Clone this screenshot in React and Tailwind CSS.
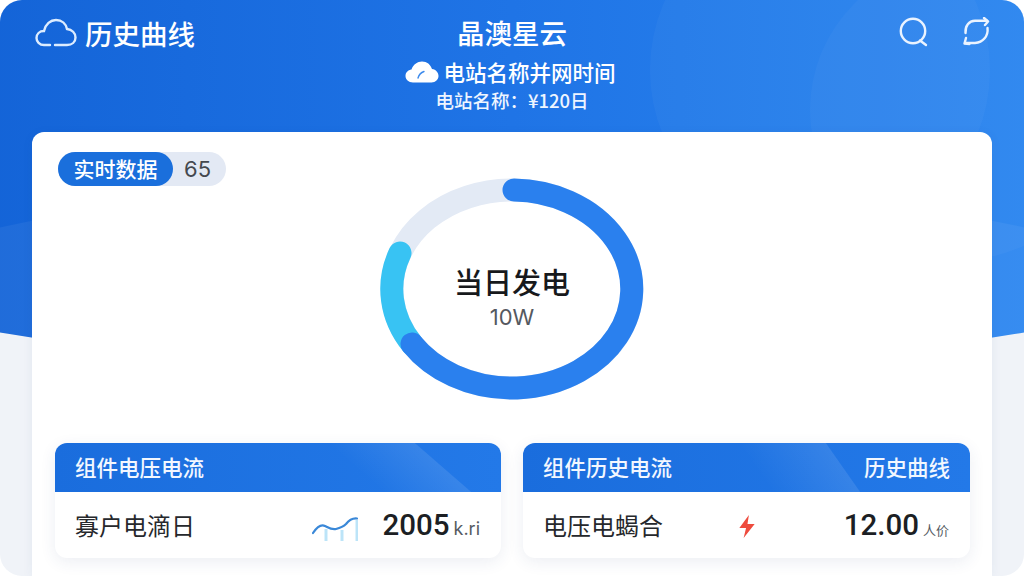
const cjk = "font-['Noto_Sans_CJK_SC','Noto_Sans',sans-serif]";

function Ring() {
  return (
    <svg width="264" height="224" viewBox="0 0 264 224" className="block">
      <ellipse cx="132" cy="112" rx="120" ry="99" fill="none" stroke="#e3eaf5" strokeWidth="23" />
      <path d="M20 76 A120 99 0 0 0 32 167" fill="none" stroke="#38c3f3" strokeWidth="23" strokeLinecap="round" />
      <path d="M32 167 A120 99 0 1 0 134 13" fill="none" stroke="#2a80ee" strokeWidth="23" strokeLinecap="round" />
    </svg>
  );
}

function LogoCloud() {
  return (
    <svg width="42" height="30" viewBox="0 0 42 30" fill="none" stroke="#dcecff" strokeWidth="2.4" strokeLinecap="round">
      <path d="M15 27H9C4.5 27 1.5 23.5 1.5 20C1.5 16 4.5 13 9 13C10.5 6 15.5 2 21 2C27 2 31 6 32 11C37 11.5 40.5 15 40.5 19.5C40.5 24 37 27 32 27H20" />
    </svg>
  );
}

function SolidCloud() {
  return (
    <svg width="34" height="22" viewBox="0 0 34 22" fill="white">
      <path d="M8 21.5C3.5 21.5 0.5 18.5 0.5 15C0.5 11.5 3 9 6.5 8.5C8 3.5 12.5 0.5 17 0.5C22 0.5 25.5 3.5 27 8C31 8.5 33.5 11.5 33.5 15C33.5 18.5 30.5 21.5 26.5 21.5Z" />
      <path d="M13 17C14 13.5 16 11.5 19 10.5" fill="none" stroke="#3d8bec" strokeWidth="1.4" strokeLinecap="round" />
    </svg>
  );
}

function SearchIcon() {
  return (
    <svg width="30" height="30" viewBox="0 0 30 30" fill="none" stroke="#eaf3ff" strokeWidth="2.4" strokeLinecap="round">
      <circle cx="14" cy="14" r="12.2" />
      <path d="M21 23.5L27 28" />
    </svg>
  );
}

function SyncIcon() {
  return (
    <svg width="28" height="30" viewBox="0 0 28 30" fill="none" stroke="#eaf3ff" strokeWidth="2.4" strokeLinecap="round" strokeLinejoin="round">
      <path d="M2.5 16C2 9 6 4 12 3.8H24" />
      <path d="M21 1L25 4.5L22 8" />
      <path d="M24.5 11C25.5 19 20 25.5 12 26H2" />
      <path d="M3 21L1.5 26.5L6.5 27" />
    </svg>
  );
}

function Spark() {
  return (
    <svg width="46" height="24" viewBox="0 0 46 24" fill="none">
      <path d="M14 12V24M30 13V24M45 3V24" stroke="#bce4f8" strokeWidth="3" />
      <path d="M1 16C5 10 9 7 13 9C17 11 20 13 24 12C28 11 31 10 34 7C37 3 40 1 45 1.5" stroke="#3a88d8" strokeWidth="2.2" strokeLinecap="round" />
    </svg>
  );
}

function Bolt() {
  return (
    <svg width="18" height="23" viewBox="0 0 18 24" fill="#ee4b3e">
      <path d="M11 0L1 13.5H8L5.5 24L17 9.5H9.5L11 0Z" />
    </svg>
  );
}

function Panel({ head, right, label, icon, iconClass, value, unit, unitClass, sheenClass }) {
  return (
    <div className="overflow-hidden rounded-xl bg-white shadow-[0_4px_16px_rgba(40,70,120,0.09)]">
      <div className="relative h-[49px] overflow-hidden bg-gradient-to-r from-[#1a6ddd] to-[#2379e8]">
        <div className={sheenClass} />
        <div className="relative flex h-full items-center justify-between px-5 text-[21.5px] font-medium text-[#f2f7ff]">
          <span>{head}</span>
          {right && <span>{right}</span>}
        </div>
      </div>
      <div className="flex h-[66px] items-center pl-5 pr-[21px]">
        <span className="text-[24px] text-[#26282c]">{label}</span>
        <div className={iconClass}>{icon}</div>
        <span className="ml-auto flex items-baseline text-[#1c1f24]">
          <span className="font-['Roboto',sans-serif] text-[29.5px] font-medium">{value}</span>
          <span className={unitClass}>{unit}</span>
        </span>
      </div>
    </div>
  );
}

export default function App() {
  return (
    <div className={`relative h-[576px] w-[1024px] overflow-hidden bg-white ${cjk}`}>
      {/* page background with the curved blue header */}
      <div className="absolute inset-0 overflow-hidden rounded-[22px] bg-[#f0f3f8]">
        <div className="absolute left-[-138px] top-[-300px] h-[667px] w-[1300px] overflow-hidden rounded-b-[50%_90px] bg-gradient-to-r from-[#1160d4] via-[#1f74e6] to-[#2f8bf2]">
          <div className="absolute left-[-200px] top-[477px] h-[500px] w-[1700px] rounded-[50%] bg-white/[0.05]" />
          <div className="absolute left-[788px] top-[200px] h-[340px] w-[340px] rounded-full bg-white/[0.03]" />
          <div className="absolute left-[948px] top-[260px] h-[300px] w-[300px] rounded-full bg-white/[0.03]" />
        </div>
      </div>

      <div className="relative flex h-full flex-col">
        <header className="relative h-[132px] text-white">
          <div className="absolute left-[35px] top-[15px] flex items-center gap-[8px]">
            <LogoCloud />
            <span className="text-[27.5px] font-medium leading-9">历史曲线</span>
          </div>
          <div className="flex flex-col items-center pt-[14px]">
            <span className="text-[27.5px] font-medium leading-9">晶澳星云</span>
            <div className="mt-[8px] flex items-center gap-[4px] pr-[3px]">
              <SolidCloud />
              <span className="text-[21.5px] font-medium leading-7">电站名称并网时间</span>
            </div>
            <span className="mt-[2px] text-[18.5px] font-medium leading-6 text-[#eef5ff]">电站名称：¥120日</span>
          </div>
          <div className="absolute right-[33px] top-[17px] flex items-center gap-[34px]">
            <SearchIcon />
            <SyncIcon />
          </div>
        </header>

        <main className="mx-8 flex-1 rounded-t-xl bg-white shadow-[0_2px_12px_rgba(40,70,120,0.06)]">
          <div className="pl-[26px] pt-5">
            <div className="flex h-[34px] w-[168px] items-center rounded-full bg-[#e3e9f4]">
              <span className="flex h-full w-[115px] items-center justify-center rounded-full bg-[#1a6fdc] text-[21px] font-medium text-white">实时数据</span>
              <span className="ml-[11px] font-['Inter',sans-serif] text-[22px] text-[#44484f]">65</span>
            </div>
          </div>

          <div className="relative mt-[-9px] flex justify-center">
            <Ring />
            <div className="absolute inset-0 flex flex-col items-center justify-center pt-[15px]">
              <span className="text-[29px] font-medium leading-9 text-[#17191c]">当日发电</span>
              <span className="mt-1 font-['Inter',sans-serif] text-[22px] leading-7 text-[#55595f]">10W</span>
            </div>
          </div>

          <div className="mt-[42px] grid grid-cols-[446px_447px] gap-[22px] pl-[23px]">
            <Panel
              head="组件电压电流"
              label="寡户电滴日"
              icon={<Spark />}
              iconClass="ml-[117px] mt-[7px]"
              value="2005"
              unit="k.ri"
              unitClass="ml-1 font-['Inter',sans-serif] text-[18px] text-[#555a62]"
              sheenClass="absolute inset-y-0 left-[300px] w-[88px] skew-x-[49deg] bg-gradient-to-r from-transparent to-white/10"
            />
            <Panel
              head="组件历史电流"
              right="历史曲线"
              label="电压电蝎合"
              icon={<Bolt />}
              iconClass="ml-[75px] mt-[3px]"
              value="12.00"
              unit="人价"
              unitClass="ml-1 text-[13px] text-[#555a62]"
              sheenClass="absolute inset-y-0 left-[232px] w-[88px] skew-x-[35deg] bg-gradient-to-r from-transparent to-white/10"
            />
          </div>
        </main>
      </div>
    </div>
  );
}
